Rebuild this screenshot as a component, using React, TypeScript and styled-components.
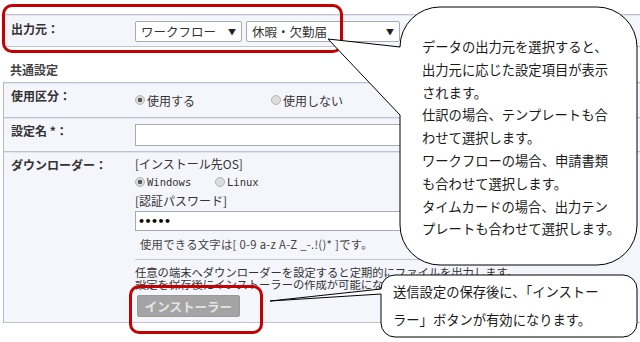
import React from "react";
import styled, { createGlobalStyle } from "styled-components";

const GlobalStyle = createGlobalStyle`
  html, body { margin: 0; padding: 0; background: #ffffff; }
  body { font-family: "Noto Sans CJK JP", "Noto Sans", sans-serif; color: #333333; }
`;

const Page = styled.div`
  position: relative;
  width: 640px;
  height: 342px;
  overflow: hidden;
  padding: 14px 0 0 3px;
  box-sizing: border-box;
  font-size: 12px;
`;

const Table = styled.div`
  border-left: 1px solid #b9b9c6;
  width: 680px;
`;

const Row = styled.div`
  display: grid;
  grid-template-columns: 131px 1fr;
  background: #f5f5fc;
  border-top: 1px solid #c2c2cf;
  box-shadow: inset 0 1px 0 #e3e3f5;
  &:last-child {
    border-bottom: 1px solid #c2c2cf;
  }
`;

const Label = styled.div<{ $pt?: number }>`
  padding: ${(p) => p.$pt ?? 5}px 0 0 7px;
  font-weight: bold;
  line-height: 16px;
  color: #333;
  white-space: nowrap;
`;

const Value = styled.div<{ $pt: number; $pb: number }>`
  padding: ${(p) => p.$pt}px 0 ${(p) => p.$pb}px 0;
  display: flex;
  flex-direction: column;
  align-items: flex-start;
`;

const Inline = styled.div<{ $gap?: number; $h?: number }>`
  display: flex;
  align-items: center;
  gap: ${(p) => p.$gap ?? 4}px;
  height: ${(p) => p.$h ?? 16}px;
`;

const SelectBox = styled.div<{ $w: number }>`
  width: ${(p) => p.$w}px;
  height: 21px;
  box-sizing: border-box;
  border: 1px solid #a9a9b3;
  border-radius: 2px;
  background: #fff;
  display: flex;
  align-items: center;
  justify-content: space-between;
  padding: 0 5px 0 5px;
  font-size: 12.5px;
  color: #333;
`;

const Arrow = styled.span`
  font-size: 8px;
  color: #222;
`;

const SectionTitle = styled.div`
  margin: 15px 0 4px 0;
  padding-left: 7px;
  font-weight: bold;
  line-height: 16px;
  color: #444;
`;

const RadioItem = styled.label<{ $w?: number }>`
  display: flex;
  align-items: center;
  gap: 2px;
  width: ${(p) => (p.$w ? `${p.$w}px` : "auto")};
  color: #333;
`;

const RadioDot = styled.span<{ $on?: boolean }>`
  width: 10px;
  height: 10px;
  box-sizing: border-box;
  border-radius: 50%;
  border: 1px solid #b4b4b4;
  background: ${(p) => (p.$on ? "radial-gradient(circle, #555 0 2px, #dadada 2.5px)" : "#dcdcdc")};
  flex: none;
`;

const Mono = styled.span`
  font-family: "DejaVu Sans Mono", "Liberation Mono", monospace;
  font-size: 10.5px;
  font-weight: normal;
  color: #333;
`;

const TextInput = styled.div<{ $h: number; $mt?: number }>`
  width: 470px;
  height: ${(p) => p.$h}px;
  margin-top: ${(p) => p.$mt ?? 0}px;
  box-sizing: border-box;
  border: 1px solid #a9a9b3;
  background: #fff;
  display: flex;
  align-items: center;
  padding-left: 2px;
  font-family: "DejaVu Sans", sans-serif;
  font-size: 11px;
  font-weight: bold;
  letter-spacing: -0.5px;
  color: #000;
`;

const Line = styled.div<{ $h: number; $mt?: number; $size?: number; $pl?: number; $color?: string; $ls?: number }>`
  height: ${(p) => p.$h}px;
  line-height: ${(p) => p.$h}px;
  margin-top: ${(p) => p.$mt ?? 0}px;
  padding-left: ${(p) => p.$pl ?? 0}px;
  font-size: ${(p) => p.$size ?? 12}px;
  letter-spacing: ${(p) => p.$ls ?? 0}px;
  color: ${(p) => p.$color ?? "#333"};
  white-space: pre;
`;

const Rule = styled.div`
  width: 480px;
  height: 1px;
  background: #c4c4c4;
  margin-top: 6px;
`;

const ClipLine = styled.div`
  height: 12px;
  overflow: hidden;
  font-size: 11.3px;
  color: #333;
  white-space: nowrap;
  & > span {
    display: block;
    line-height: 16px;
    margin-top: -4px;
  }
`;

const DisabledButton = styled.div`
  margin: 3px 0 0 2px;
  width: 103px;
  height: 22px;
  box-sizing: border-box;
  border: 1px solid #9a9a9a;
  border-radius: 2px;
  background: #a4a4a4;
  color: #e4e4e4;
  font-size: 12.5px;
  font-weight: bold;
  display: flex;
  align-items: center;
  justify-content: center;
`;

/* ---------- annotation overlay ---------- */

const Overlay = styled.div`
  position: absolute;
  inset: 0;
  pointer-events: none;
`;

const ShapeLayer = styled.svg`
  position: absolute;
  left: 0;
  top: 0;
`;

const RedFrame = styled.div<{ $x: number; $y: number; $w: number; $h: number }>`
  position: absolute;
  left: ${(p) => p.$x}px;
  top: ${(p) => p.$y}px;
  width: ${(p) => p.$w}px;
  height: ${(p) => p.$h}px;
  box-sizing: border-box;
  border: 3px solid #c40000;
  border-radius: 10px;
`;

const CalloutText = styled.div<{ $x: number; $y: number; $lh: number }>`
  position: absolute;
  left: ${(p) => p.$x}px;
  top: ${(p) => p.$y}px;
  font-size: 13.3px;
  line-height: ${(p) => p.$lh}px;
  color: #1a1a1a;
  white-space: nowrap;
`;

const bubble1Lines = [
  "データの出力元を選択すると、",
  "出力元に応じた設定項目が表示",
  "されます。",
  "仕訳の場合、テンプレートも合",
  "わせて選択します。",
  "ワークフローの場合、申請書類",
  "も合わせて選択します。",
  "タイムカードの場合、出力テン",
  "プレートも合わせて選択します。",
];

const bubble2Lines = ["送信設定の保存後に、「インストー", "ラー」ボタンが有効になります。"];

export default function App() {
  return (
    <>
      <GlobalStyle />
      <Page>
        <Table>
          <Row>
            <Label $pt={6}>出力元：</Label>
            <Value $pt={6} $pb={4}>
              <Inline $gap={4} $h={21}>
                <SelectBox $w={107}>
                  <span>ワークフロー</span>
                  <Arrow>▼</Arrow>
                </SelectBox>
                <SelectBox $w={154}>
                  <span>休暇・欠勤届</span>
                  <Arrow>▼</Arrow>
                </SelectBox>
              </Inline>
            </Value>
          </Row>
        </Table>

        <SectionTitle>共通設定</SectionTitle>

        <Table>
          <Row>
            <Label>使用区分：</Label>
            <Value $pt={9} $pb={9}>
              <Inline $gap={0}>
                <RadioItem $w={136}>
                  <RadioDot $on />
                  使用する
                </RadioItem>
                <RadioItem>
                  <RadioDot />
                  使用しない
                </RadioItem>
              </Inline>
            </Value>
          </Row>
          <Row>
            <Label>設定名 *：</Label>
            <Value $pt={6} $pb={5}>
              <TextInput $h={22} />
            </Value>
          </Row>
          <Row>
            <Label>ダウンローダー：</Label>
            <Value $pt={4} $pb={5}>
              <Line $h={16}>[インストール先OS]</Line>
              <Inline $gap={0} $h={20}>
                <RadioItem $w={80}>
                  <RadioDot $on />
                  <Mono>Windows</Mono>
                </RadioItem>
                <RadioItem>
                  <RadioDot />
                  <Mono>Linux</Mono>
                </RadioItem>
              </Inline>
              <Line $h={18}>[認証パスワード]</Line>
              <TextInput $h={20} $mt={1}>•••••</TextInput>
              <Line $h={18} $mt={4} $size={11.3} $pl={5} $color="#444" $ls={0.3}>
                {"使用できる文字は[ 0-9 a-z A-Z _-.!()* ]です。"}
              </Line>
              <Rule />
              <Line $h={16} $mt={4} $size={11.3}>
                任意の端末へダウンローダーを設定すると定期的にファイルを出力します。
              </Line>
              <ClipLine>
                <span>設定を保存後にインストーラーの作成が可能になります。</span>
              </ClipLine>
              <DisabledButton>インストーラー</DisabledButton>
            </Value>
          </Row>
        </Table>

        <Overlay>
          <RedFrame $x={2} $y={4} $w={341} $h={49} />
          <RedFrame $x={129} $y={285} $w={134} $h={49} />
          <ShapeLayer width={640} height={342} viewBox="0 0 640 342">
            <path
              d="M 400 47 A 40 40 0 0 1 440 7 L 597 7 A 40 40 0 0 1 637 47 L 637 225 A 40 40 0 0 1 597 265 L 440 265 A 40 40 0 0 1 400 225 L 400 115 L 328 39 Z"
              fill="#ffffff"
              stroke="#000000"
              strokeWidth={1}
            />
            <path
              d="M 381 294 L 381 323 A 14 14 0 0 0 395 337 L 623 337 A 14 14 0 0 0 637 323 L 637 289 A 14 14 0 0 0 623 275 L 395 275 A 14 14 0 0 0 381 289 L 270 301 Z"
              fill="#ffffff"
              stroke="#000000"
              strokeWidth={1}
            />
          </ShapeLayer>
          <CalloutText $x={422} $y={36} $lh={22.8}>
            {bubble1Lines.map((l) => (
              <div key={l}>{l}</div>
            ))}
          </CalloutText>
          <CalloutText $x={393} $y={278} $lh={28}>
            {bubble2Lines.map((l) => (
              <div key={l}>{l}</div>
            ))}
          </CalloutText>
        </Overlay>
      </Page>
    </>
  );
}
